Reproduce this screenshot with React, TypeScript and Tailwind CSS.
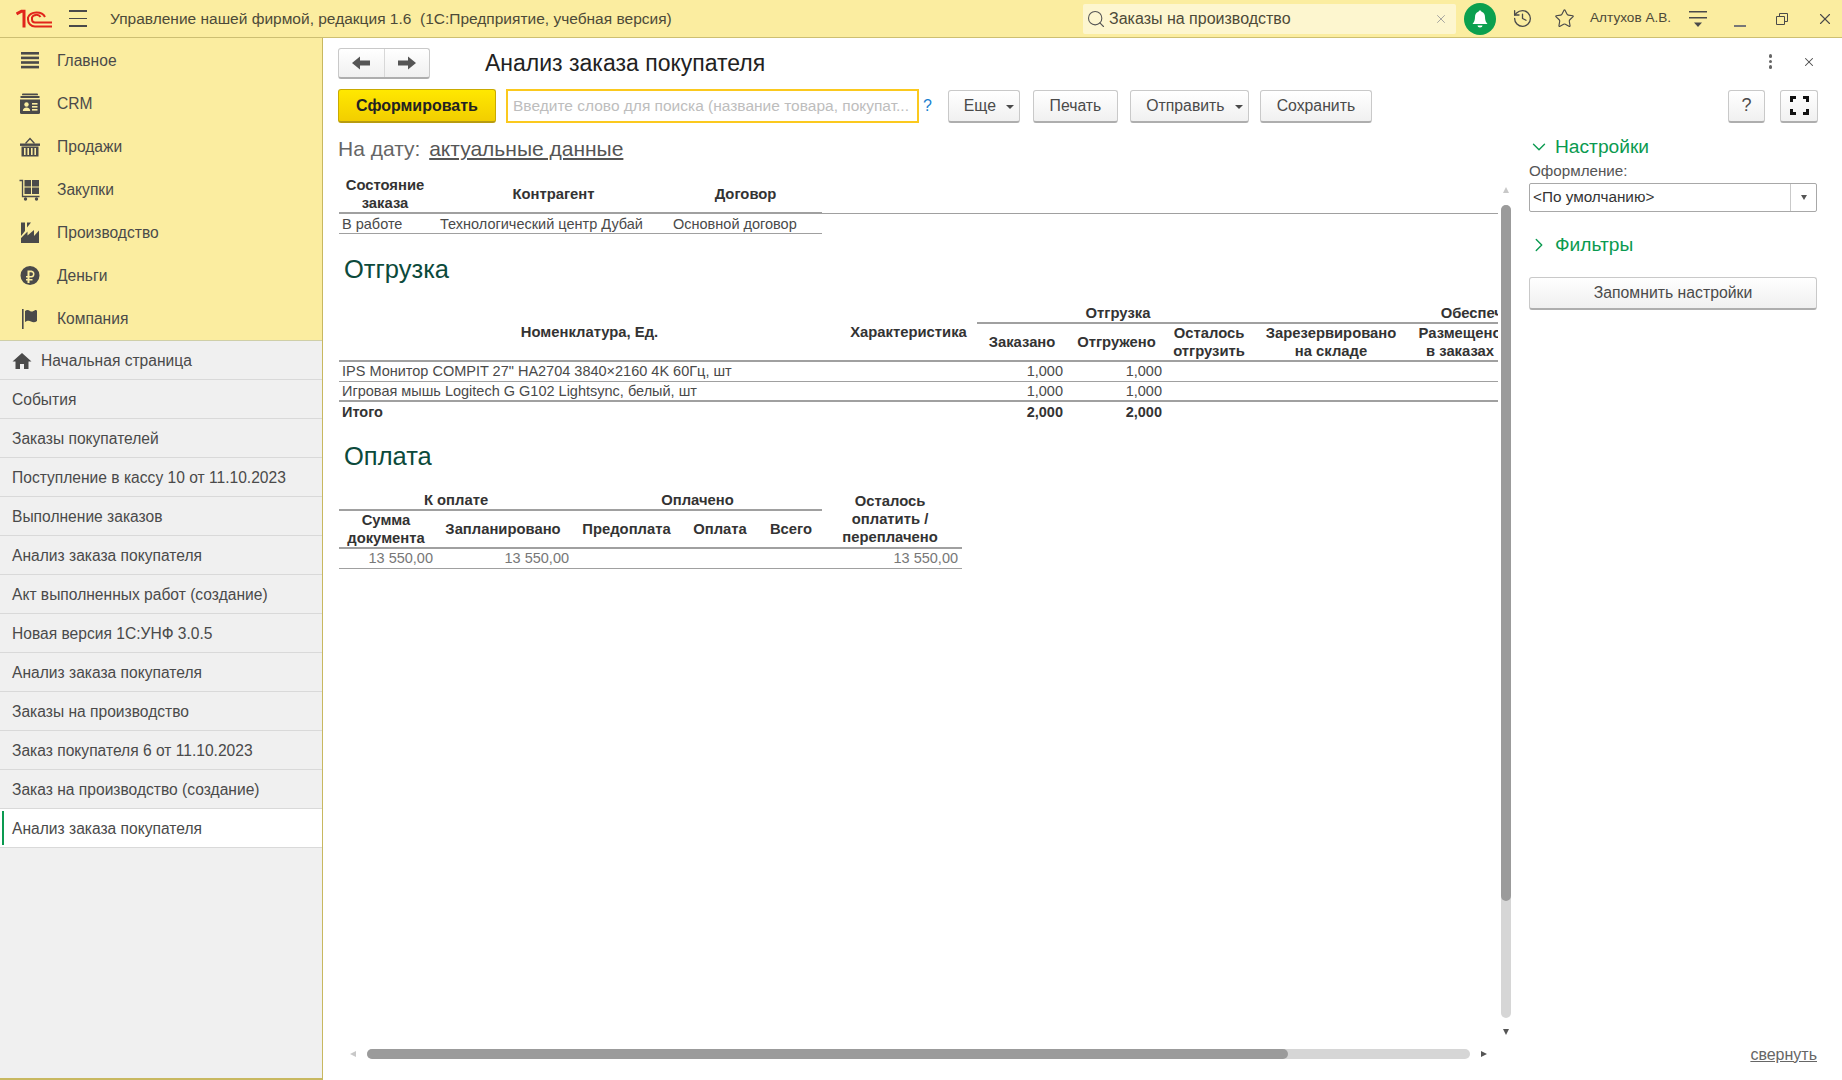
/*
 * 1C "Анализ заказа покупателя" report form
 * Top bar, yellow section panel + open windows list, report area, settings panel
 */
import { ChevronDown, ChevronRight, History, Search, Star, X } from "lucide-react";

const sections = [
  { key: "main", label: "Главное" },
  { key: "crm", label: "CRM" },
  { key: "sales", label: "Продажи" },
  { key: "buy", label: "Закупки" },
  { key: "prod", label: "Производство" },
  { key: "money", label: "Деньги" },
  { key: "company", label: "Компания" },
];

const openWindows = [
  "События",
  "Заказы покупателей",
  "Поступление в кассу 10 от 11.10.2023",
  "Выполнение заказов",
  "Анализ заказа покупателя",
  "Акт выполненных работ (создание)",
  "Новая версия 1С:УНФ 3.0.5",
  "Анализ заказа покупателя",
  "Заказы на производство",
  "Заказ покупателя 6 от 11.10.2023",
  "Заказ на производство (создание)",
];

function SectionIcon({ name }: { name: string }) {
  const cls = "w-[22px] h-[22px] text-[#4a4a4a]";
  if (name === "main")
    return (
      <svg className={cls} viewBox="0 0 22 22" fill="currentColor">
        <rect x="2" y="2" width="18" height="2.6" />
        <rect x="2" y="6.6" width="18" height="2.6" />
        <rect x="2" y="11.2" width="18" height="2.6" />
        <rect x="2" y="15.8" width="18" height="2.6" />
      </svg>
    );
  if (name === "crm")
    return (
      <svg className={cls} viewBox="0 0 22 22" fill="currentColor">
        <rect x="3" y="0.5" width="16" height="1.8" rx="0.9" />
        <rect x="1.5" y="3" width="19" height="2" />
        <path d="M1 6.5h20v13a1.5 1.5 0 0 1-1.5 1.5h-17A1.5 1.5 0 0 1 1 19.5z" />
        <circle cx="7.5" cy="11.5" r="2.2" fill="#fbeda0" />
        <path d="M3.8 18c0-2.4 1.6-3.6 3.7-3.6s3.7 1.2 3.7 3.6z" fill="#fbeda0" />
        <rect x="13" y="10" width="5.5" height="1.6" fill="#fbeda0" />
        <rect x="13" y="13" width="5.5" height="1.6" fill="#fbeda0" />
        <rect x="13" y="16" width="5.5" height="1.6" fill="#fbeda0" />
      </svg>
    );
  if (name === "sales")
    return (
      <svg className={cls} viewBox="0 0 22 22" fill="currentColor">
        <path d="M6.5 7.5 11 2.5l4.5 5" fill="none" stroke="currentColor" strokeWidth="1.3" />
        <rect x="1" y="7.5" width="20" height="2.4" />
        <path d="M2.5 10.5h17v10h-17zM5 12v7h1.6v-7zm3.4 0v7H10v-7zm3.6 0v7h1.6v-7zm3.4 0v7H17v-7z" fillRule="evenodd" />
      </svg>
    );
  if (name === "buy")
    return (
      <svg className={cls} viewBox="0 0 22 22" fill="currentColor">
        <path d="M0.5 1.5h3v16h17" fill="none" stroke="currentColor" strokeWidth="1.3" />
        <rect x="5.5" y="1" width="6.5" height="6.5" />
        <rect x="13" y="1" width="7" height="6.5" />
        <rect x="5.5" y="8.5" width="6.5" height="6.5" />
        <rect x="13" y="8.5" width="7" height="6.5" />
        <circle cx="6.5" cy="20" r="1.7" />
        <circle cx="17.5" cy="20" r="1.7" />
      </svg>
    );
  if (name === "prod")
    return (
      <svg className={cls} viewBox="0 0 22 22" fill="currentColor">
        <path d="M2 0.5h4v8.5l-4 5zM8 0.5h4L8 5.5z" />
        <path d="M2 21v-5l6.5-6.5v4L15 8v6l5-5.5V21z" />
      </svg>
    );
  if (name === "money")
    return (
      <svg className={cls} viewBox="0 0 22 22" fill="currentColor">
        <path
          fillRule="evenodd"
          d="M11 1a9.5 9.5 0 1 1 0 19 9.5 9.5 0 0 1 0-19zM8.5 5.5V11H7v1.6h1.5V14H7v1.4h1.5V18h2v-2.6h3V14h-3v-1.4h2a3.6 3.6 0 0 0 0-7.1zm2 1.7h1.6a1.9 1.9 0 0 1 0 3.8h-1.6z"
        />
      </svg>
    );
  return (
    <svg className={cls} viewBox="0 0 22 22" fill="currentColor">
      <rect x="3" y="1" width="1.6" height="20" />
      <path d="M6 3c2-1.500 3.500-1 5 0 1.500 1 3.500.5 5-1 1 0 2 0 2 1v10c-2 1.500-4 1.500-6 .5-2-1-3.500-1-6 .5z" />
    </svg>
  );
}

function Btn({ children, className = "" }: { children: React.ReactNode; className?: string }) {
  return (
    <button className={`h-[33px] flex items-center justify-center rounded-[3px] border border-[#c9c9c9] border-b-2 border-b-[#aeaeae] bg-gradient-to-b from-white to-[#f0f0f0] text-[15.8px] text-[#4a4a4a] ${className}`}>
      {children}
    </button>
  );
}

function Caret() {
  return <span className="ml-[10px] mt-[3px] w-0 h-0 border-x-[4px] border-x-transparent border-t-[4px] border-t-[#4a4a4a]" />;
}

export default function App() {
  return (
    <div className="w-[1842px] h-[1080px] flex flex-col overflow-hidden bg-white text-[14.5px] text-[#4a4a4a] font-['Liberation_Sans',Arial,sans-serif]">
      {/* Top bar */}
      <header className="h-[38px] shrink-0 flex items-center bg-[#fbeda0] border-b border-[#cdbf72]">
        <svg className="ml-[16px] w-[37px] h-[20px]" viewBox="0 0 37 20" fill="none" stroke="#e1251b">
          <path d="M0.500 5 5.500 2.200H8V18.500" strokeWidth="3" />
          <path d="M29 8A9 7 0 0 0 12 8.500V10.500A7 7 0 0 0 19 17.500H36" strokeWidth="2" />
          <path d="M24.500 8A4.500 3.500 0 0 0 16 8.500V10.500A3 3 0 0 0 19 13.500H36" strokeWidth="2" />
        </svg>
        <div className="ml-[16px] w-[18px] flex flex-col gap-[6px]">
          <span className="h-[1.5px] bg-[#4a4a4a]" />
          <span className="h-[1.5px] bg-[#4a4a4a]" />
          <span className="h-[1.5px] bg-[#4a4a4a]" />
        </div>
        <span className="ml-[23px] text-[15.5px] text-[#4d4a38] whitespace-pre">Управление нашей фирмой, редакция 1.6  (1С:Предприятие, учебная версия)</span>
        <div className="ml-auto w-[373px] h-[30px] flex items-center rounded-[2px] bg-[#fdf6cf] mr-[8px]">
          <Search className="ml-[3px] w-[20px] h-[20px] text-[#555]" strokeWidth={1.3} />
          <span className="ml-[3px] text-[16px] text-[#4d4a38]">Заказы на производство</span>
          <X className="ml-auto mr-[8px] w-[14px] h-[14px] text-[#9a9a9a]" strokeWidth={1.5} />
        </div>
        <div className="w-[32px] h-[32px] rounded-full bg-[#0ba04f] flex items-center justify-center">
          <svg className="w-[20px] h-[20px]" viewBox="0 0 20 20" fill="white">
            <path d="M10 1.500c.9 0 1.400.6 1.500 1.300C14 3.500 15 5.500 15 8c0 3 .8 5 2.500 7h-15C4.200 13 5 11 5 8c0-2.500 1-4.500 3.500-5.200.1-.7.6-1.300 1.500-1.300z" />
            <path d="M7.500 16.500h5a2.500 2 0 0 1-5 0z" />
          </svg>
        </div>
        <History className="ml-[16px] w-[21px] h-[21px] text-[#4a4a4a]" strokeWidth={1.5} />
        <Star className="ml-[21px] w-[21px] h-[21px] text-[#4a4a4a]" strokeWidth={1.3} />
        <span className="ml-[15px] w-[82px] text-[13.6px] text-[#4d4a38] whitespace-nowrap">Алтухов А.В.</span>
        <svg className="ml-[17px] w-[18px] h-[18px]" viewBox="0 0 18 18" fill="#4a4a4a">
          <rect x="0" y="1" width="18" height="1.500" />
          <rect x="0" y="7" width="18" height="1.500" />
          <path d="M5 12.500h8l-4 4.500z" />
        </svg>
        <span className="ml-[27px] mt-[14px] w-[12px] h-[2px] bg-[#777]" />
        <svg className="ml-[30px] w-[12px] h-[12px]" viewBox="0 0 12 12" fill="none" stroke="#4a4a4a">
          <path d="M.5 3.500h8v8h-8zM3.500 3.500v-3h8v8h-3" />
        </svg>
        <X className="ml-[28px] mr-[8px] w-[18px] h-[18px] text-[#4a4a4a]" strokeWidth={1.5} />
      </header>

      <div className="flex-1 flex min-h-0">
        {/* Sidebar */}
        <aside className="w-[323px] shrink-0 flex flex-col bg-[#f0f0f0] border-r border-b-2 border-[#c8b860]">
          <nav className="h-[303px] shrink-0 pt-[1px] flex flex-col bg-[#fbeda0] border-b border-[#cfcfa8]">
            {sections.map((s) => (
              <div key={s.key} className="h-[43px] flex items-center">
                <span className="ml-[19px] w-[38px]">
                  <SectionIcon name={s.key} />
                </span>
                <span className="text-[15.6px]">{s.label}</span>
              </div>
            ))}
          </nav>
          <div className="h-[39px] pt-[1px] flex items-center border-b border-[#d9d9d9]">
            <svg className="ml-[12px] w-[20px] h-[18px] text-[#4a4a4a]" viewBox="0 0 20 18" fill="currentColor">
              <path d="M10 1 0.500 9.500H3.500V17H8v-5h4v5h4.500V9.500h3z" />
            </svg>
            <span className="ml-[9px] text-[15.6px]">Начальная страница</span>
          </div>
          {openWindows.map((w, i) => (
            <div key={i} className="h-[39px] pt-[1px] flex items-center pl-[12px] text-[15.6px] border-b border-[#d9d9d9]">
              {w}
            </div>
          ))}
          <div className="h-[39px] flex items-center text-[15.6px] bg-white border-b border-[#d9d9d9]">
            <span className="ml-[2px] w-[2px] h-[34px] bg-[#0a9a50]" />
            <span className="ml-[8px] mt-[1px]">Анализ заказа покупателя</span>
          </div>
        </aside>

        {/* Form */}
        <main className="flex-1 min-w-0 flex flex-col">
          <div className="h-[51px] shrink-0 flex items-center pl-[15px] pr-[26px]">
            <div className="h-[31px] w-[92px] flex rounded-[3px] border border-[#c9c9c9] border-b-2 border-b-[#aeaeae] bg-gradient-to-b from-white to-[#f0f0f0]">
              <span className="flex-1 flex items-center justify-center border-r border-[#d8d8d8]">
                <svg className="w-[18px] h-[14px]" viewBox="0 0 18 14" fill="#555">
                  <path d="M0 7 8 0.500V4.500H18V9.500H8V13.500z" />
                </svg>
              </span>
              <span className="flex-1 flex items-center justify-center">
                <svg className="w-[18px] h-[14px]" viewBox="0 0 18 14" fill="#555">
                  <path d="M18 7 10 0.500V4.500H0V9.500H10V13.500z" />
                </svg>
              </span>
            </div>
            <h1 className="ml-[55px] text-[23px] text-[#222]">Анализ заказа покупателя</h1>
            <span className="ml-auto -mt-[4px] flex flex-col gap-[2px]">
              <span className="w-[3.5px] h-[3.5px] rounded-full bg-[#666]" />
              <span className="w-[3.5px] h-[3.5px] rounded-full bg-[#666]" />
              <span className="w-[3.5px] h-[3.5px] rounded-full bg-[#666]" />
            </span>
            <X className="ml-[30px] -mt-[4px] w-[14px] h-[14px] text-[#4a4a4a]" strokeWidth={1.8} />
          </div>

          {/* Toolbar */}
          <div className="h-[34px] shrink-0 flex items-center pl-[15px] pr-[24px]">
            <button className="w-[158px] h-[34px] rounded-[3px] border border-[#c9aa00] border-b-2 border-b-[#b89c10] bg-gradient-to-b from-[#ffe800] to-[#f2ce00] text-[16px] font-bold text-[#222]">
              Сформировать
            </button>
            <div className="ml-[10px] w-[413px] h-[34px] flex items-center border-2 border-[#fbc91e] pl-[5px] text-[15.5px] text-[#bdbdbd] whitespace-nowrap overflow-hidden">
              Введите слово для поиска (название товара, покупат...
            </div>
            <span className="ml-[4px] text-[16px] text-[#1a7fd0]">?</span>
            <Btn className="ml-[16px] w-[72px] pl-[10px]">Еще<Caret /></Btn>
            <Btn className="ml-[13px] w-[85px]">Печать</Btn>
            <Btn className="ml-[12px] w-[119px] pl-[10px]">Отправить<Caret /></Btn>
            <Btn className="ml-[11px] w-[112px]">Сохранить</Btn>
            <Btn className="ml-auto w-[37px] text-[18px]">?</Btn>
            <Btn className="ml-[15px] w-[38px]">
              <svg className="w-[19px] h-[19px]" viewBox="0 0 19 19" fill="none" stroke="#111" strokeWidth="3">
                <path d="M1.500 6V1.500H6M13 1.500h4.500V6M17.500 13v4.500H13M6 17.500H1.500V13" />
              </svg>
            </Btn>
          </div>

          <div className="flex-1 min-h-0 flex">
            {/* Report */}
            <div className="flex-1 min-w-0 flex flex-col">
              <div className="h-[49px] shrink-0 pl-[15px] pt-[15px] text-[21px] leading-[22px] text-[#666]">
                На дату: <span className="ml-[3px] underline decoration-2 underline-offset-2 text-[#555]">актуальные данные</span>
              </div>
              <div className="flex-1 min-h-0 grid grid-cols-[1fr_23px] grid-rows-[1fr_37px]">
                <div className="min-w-0 overflow-hidden pl-[16px]">
                  <div className="w-[1159px] overflow-hidden">
                    <HeaderTable />
                    <h2 className="ml-[5px] mt-[21px] h-[28px] text-[25.5px] leading-[28px] text-[#0c4a3b]">Отгрузка</h2>
                    <ShipTable />
                    <h2 className="ml-[5px] mt-[21px] h-[28px] text-[25.5px] leading-[28px] text-[#0c4a3b]">Оплата</h2>
                    <PayTable />
                  </div>
                </div>
                {/* Vertical scroll */}
                <div className="flex flex-col items-center w-[10px] ml-[2px]">
                  <span className="mt-[15px] w-0 h-0 border-x-[3px] border-x-transparent border-b-[6px] border-b-[#c8c8c8]" />
                  <div className="mt-[12px] w-[10px] h-[813px] rounded-[5px] bg-[#d6d6d6]">
                    <div className="h-[696px] rounded-[5px] bg-[#9b9b9b]" />
                  </div>
                  <span className="mt-[11px] w-0 h-0 border-x-[3px] border-x-transparent border-t-[6px] border-t-[#555]" />
                </div>
                {/* Horizontal scroll */}
                <div className="flex items-center pl-[27px] pb-[16px]">
                  <span className="w-0 h-0 border-y-[3px] border-y-transparent border-r-[6px] border-r-[#c8c8c8]" />
                  <div className="ml-[11px] w-[1103px] h-[10px] rounded-[5px] bg-[#d6d6d6]">
                    <div className="w-[921px] h-[10px] rounded-[5px] bg-[#9b9b9b]" />
                  </div>
                  <span className="ml-[11px] w-0 h-0 border-y-[3px] border-y-transparent border-l-[6px] border-l-[#555]" />
                </div>
                <div />
              </div>
            </div>

            {/* Settings panel */}
            <aside className="w-[320px] shrink-0 flex flex-col pl-[7px] pr-[25px]">
              <div className="mt-[12px] h-[24px] flex items-center text-[19.2px] text-[#0a9a50]">
                <ChevronDown className="w-[22px] h-[22px] -ml-[1px]" strokeWidth={1.5} />
                <span className="ml-[5px]">Настройки</span>
              </div>
              <div className="mt-[2px] h-[20px] flex items-center text-[15.2px] text-[#555]">Оформление:</div>
              <div className="mt-[2px] h-[29px] flex items-center rounded-[2px] border border-[#a8a8a8] text-[15.3px] text-[#333]">
                <span className="pl-[3px] flex-1">&lt;По умолчанию&gt;</span>
                <span className="w-[26px] h-full flex items-center justify-center border-l border-[#c9c9c9]">
                  <span className="w-0 h-0 border-x-[3px] border-x-transparent border-t-[5px] border-t-[#555]" />
                </span>
              </div>
              <div className="mt-[21px] h-[24px] flex items-center text-[19.2px] text-[#0a9a50]">
                <ChevronRight className="w-[22px] h-[22px] -ml-[1px]" strokeWidth={1.5} />
                <span className="ml-[5px]">Фильтры</span>
              </div>
              <Btn className="mt-[20px] w-full">Запомнить настройки</Btn>
              <div className="mt-auto mb-[15px] ml-auto text-[16px] leading-[20px] underline text-[#666]">свернуть</div>
            </aside>
          </div>
        </main>
      </div>
    </div>
  );
}

const th = "font-bold text-[14.8px] text-[#333] text-center align-middle leading-[18px] p-0 whitespace-nowrap";
const td = "h-[20px] p-0 leading-[18px] whitespace-nowrap";
const tdLow = "h-[20px] p-0 pt-[2px] leading-[17px] whitespace-nowrap";
const thick = "border-b-2 border-[#a0a0a0]";
const thin = "border-b border-[#a0a0a0]";

function HeaderTable() {
  return (
    <table className="mt-[-1px] table-fixed border-collapse w-[1159px]">
      <colgroup>
        <col className="w-[92px]" />
        <col className="w-[238px]" />
        <col className="w-[153px]" />
        <col />
      </colgroup>
      <thead>
        <tr className="h-[42px]">
          <th className={`${th} pt-[5px] ${thick}`}>Состояние<br />заказа</th>
          <th className={`${th} pt-[5px] pl-[7px] ${thick}`}>Контрагент</th>
          <th className={`${th} pt-[5px] ${thick}`}>Договор</th>
          <th className={thin} />
        </tr>
      </thead>
      <tbody>
        <tr>
          <td className={`${tdLow} pl-[3px] ${thin}`}>В работе</td>
          <td className={`${tdLow} pl-[9px] ${thin}`}>Технологический центр Дубай</td>
          <td className={`${tdLow} pl-[4px] ${thin}`}>Основной договор</td>
          <td />
        </tr>
      </tbody>
    </table>
  );
}

function ShipTable() {
  const rows = [
    { name: "IPS Монитор COMPIT 27\" HA2704 3840×2160 4K 60Гц, шт", line: thin },
    { name: "Игровая мышь Logitech G G102 Lightsync, белый, шт", line: thick },
  ];
  return (
    <table className="mt-[20px] table-fixed border-collapse w-[1373px]">
      <colgroup>
        <col className="w-[501px]" />
        <col className="w-[137px]" />
        <col className="w-[90px]" />
        <col className="w-[99px]" />
        <col className="w-[86px]" />
        <col className="w-[158px]" />
        <col className="w-[100px]" />
        <col className="w-[202px]" />
      </colgroup>
      <thead>
        <tr className="h-[20px]">
          <th rowSpan={2} className={`${th} ${thick}`}>Номенклатура, Ед.</th>
          <th rowSpan={2} className={`${th} ${thick}`}>Характеристика</th>
          <th colSpan={3} className={`${th} pl-[7px] pt-[1px] ${thick}`}>Отгрузка</th>
          <th colSpan={3} className={`${th} pl-[14px] pt-[1px] ${thick}`}>Обеспечение</th>
        </tr>
        <tr className="h-[37px]">
          <th className={`${th} ${thick}`}>Заказано</th>
          <th className={`${th} ${thick}`}>Отгружено</th>
          <th className={`${th} ${thick}`}>Осталось<br />отгрузить</th>
          <th className={`${th} ${thick}`}>Зарезервировано<br />на складе</th>
          <th className={`${th} ${thick}`}>Размещено<br />в заказах</th>
          <th className={thick} />
        </tr>
      </thead>
      <tbody>
        {rows.map((r) => (
          <tr key={r.name} className={r.line}>
            <td className={`${td} pl-[3px]`}>{r.name}</td>
            <td className={td} />
            <td className={`${td} text-right pr-[4px]`}>1,000</td>
            <td className={`${td} text-right pr-[4px]`}>1,000</td>
            <td className={td} />
            <td className={td} />
            <td className={td} />
            <td className={td} />
          </tr>
        ))}
        <tr className="font-bold text-[#333]">
          <td className={`${td} pl-[3px]`}>Итого</td>
          <td className={td} />
          <td className={`${td} text-right pr-[4px]`}>2,000</td>
          <td className={`${td} text-right pr-[4px]`}>2,000</td>
          <td className={td} colSpan={4} />
        </tr>
      </tbody>
    </table>
  );
}

function PayTable() {
  return (
    <table className="mt-[20px] table-fixed border-collapse w-[623px]">
      <colgroup>
        <col className="w-[98px]" />
        <col className="w-[136px]" />
        <col className="w-[107px]" />
        <col className="w-[80px]" />
        <col className="w-[62px]" />
        <col className="w-[140px]" />
      </colgroup>
      <thead>
        <tr className="h-[20px]">
          <th colSpan={2} className={`${th} ${thick}`}>К оплате</th>
          <th colSpan={3} className={`${th} ${thick}`}>Оплачено</th>
          <th rowSpan={2} className={`${th} pr-[4px] ${thick}`}>Осталось<br />оплатить /<br />переплачено</th>
        </tr>
        <tr className="h-[37px]">
          <th className={`${th} pr-[4px] ${thick}`}>Сумма<br />документа</th>
          <th className={`${th} pr-[4px] ${thick}`}>Запланировано</th>
          <th className={`${th} ${thick}`}>Предоплата</th>
          <th className={`${th} ${thick}`}>Оплата</th>
          <th className={`${th} ${thick}`}>Всего</th>
        </tr>
      </thead>
      <tbody>
        <tr className={`${thin} text-[#777]`}>
          <td className={`${td} text-right pr-[4px]`}>13 550,00</td>
          <td className={`${td} text-right pr-[4px]`}>13 550,00</td>
          <td className={td} />
          <td className={td} />
          <td className={td} />
          <td className={`${td} text-right pr-[4px]`}>13 550,00</td>
        </tr>
      </tbody>
    </table>
  );
}
